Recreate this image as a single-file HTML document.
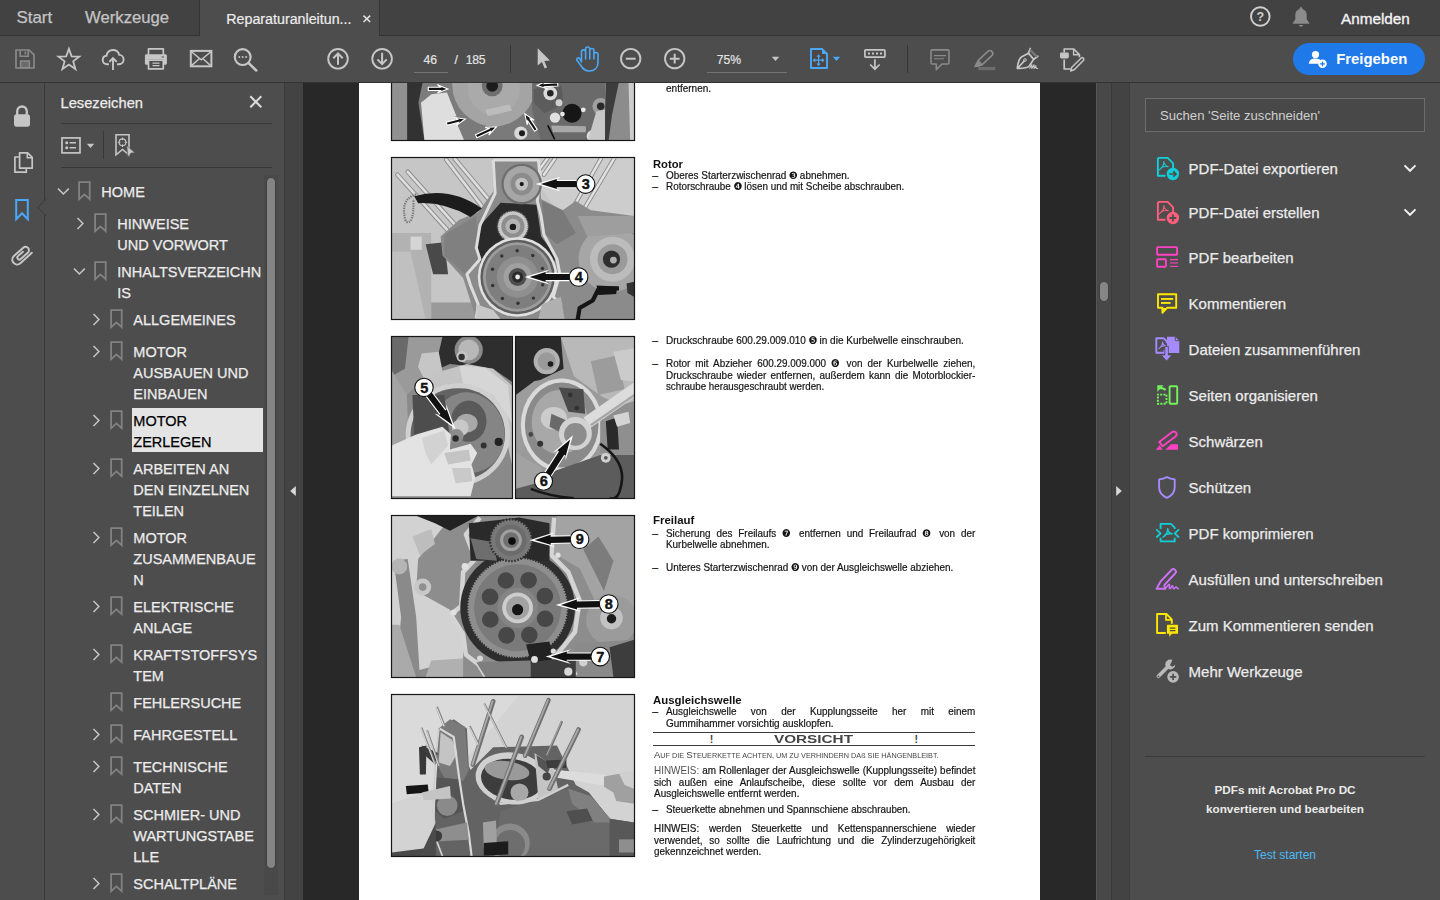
<!DOCTYPE html>
<html lang="de">
<head>
<meta charset="utf-8">
<title>Reparaturanleitung</title>
<style>
*{box-sizing:border-box;margin:0;padding:0}
html,body{width:1440px;height:900px;overflow:hidden;background:#4d4d4d;font-family:"Liberation Sans",sans-serif;color:#e6e6e6}
.abs{position:absolute}
#app{position:relative;width:1440px;height:900px;overflow:hidden;background:#4d4d4d}
/* top tab bar */
#tabbar{left:0;top:0;width:1440px;height:36px;background:#424242;border-bottom:1px solid #333}
#tab{left:199px;top:0;width:181px;height:36px;background:#4d4d4d;border-left:1px solid #353535;border-right:1px solid #353535}
.tabtxt{font-size:17.2px;color:#c4c4c4;top:7px;white-space:nowrap;-webkit-text-stroke:0.25px #c4c4c4}
/* toolbar */
#toolbar{left:0;top:36px;width:1440px;height:47px;background:#4d4d4d;border-bottom:1px solid #333}
.tbtxt{font-size:12.6px;color:#e2e2e2;white-space:nowrap;-webkit-text-stroke:0.2px #e2e2e2}
.ico{position:absolute;overflow:visible}
/* left */
#lstrip{left:0;top:83px;width:45px;height:817px;background:#4d4d4d;border-right:1px solid #3a3a3a}
#bm{left:45px;top:83px;width:240px;height:817px;background:#4d4d4d;border-right:1px solid #3a3a3a}
.bmt{position:absolute;font-size:14.5px;line-height:21px;color:#ececec;white-space:nowrap;-webkit-text-stroke:0.25px currentColor}
#lcol{left:285px;top:83px;width:18px;height:817px;background:#434343}
/* doc */
#doc{left:303px;top:83px;width:793px;height:817px;background:#282828}
#page{left:359px;top:83px;width:681px;height:817px;background:#fff}
#vscroll{left:1096px;top:83px;width:16px;height:817px;background:#484848;border-left:1px solid #575757;border-right:1px solid #3a3a3a}
#rcol{left:1112px;top:83px;width:18px;height:817px;background:#434343;border-right:1px solid #3c3c3c}
/* right */
#rp{left:1130px;top:83px;width:310px;height:817px;background:#4d4d4d}
.rpt{position:absolute;left:1188.6px;font-size:15px;color:#ececec;white-space:nowrap;line-height:20px;-webkit-text-stroke:0.25px #ececec}
.dl{position:absolute;white-space:nowrap;font-size:10.4px;line-height:12px;color:#141414;transform-origin:0 0;-webkit-text-stroke:0.2px}.dj{white-space:normal;text-align:justify;text-align-last:justify}.dg{font-family:"DejaVu Sans",sans-serif;font-size:10.6px;line-height:1px;position:relative;top:0.2px;letter-spacing:-0.8px;margin-left:-0.4px;-webkit-text-stroke:0}.dh{position:absolute;white-space:nowrap;font-size:11.7px;font-weight:bold;line-height:14px;color:#111;transform-origin:0 0}
</style>
</head>
<body>
<div id="app">
<div id="tabbar" class="abs"></div>
<div id="tab" class="abs"></div>
<div id="toolbar" class="abs"></div>
<div id="lstrip" class="abs"></div>
<div id="bm" class="abs"></div>
<div id="lcol" class="abs"></div>
<div id="doc" class="abs"></div>
<div id="page" class="abs"></div>
<div id="vscroll" class="abs"></div>
<div id="rcol" class="abs"></div>
<div id="rp" class="abs"></div>
<div class="abs tabtxt" style="left:16.5px;font-size:16.9px;top:7.5px">Start</div>
<div class="abs tabtxt" style="left:85px;font-size:16.7px;top:7.5px">Werkzeuge</div>
<div class="abs" style="left:226.3px;top:10.5px;font-size:14.25px;color:#ededed;white-space:nowrap;-webkit-text-stroke:0.2px #ededed">Reparaturanleitun...</div>
<svg class="ico" style="left:362px;top:14px" width="10" height="10" viewBox="0 0 10 10"><path d="M1.5 1.7 L8.2 8 M8.2 1.7 L1.5 8" stroke="#e0e0e0" stroke-width="1.6" fill="none"/></svg>
<svg class="ico" style="left:1249px;top:5px" width="23" height="23" viewBox="0 0 23 23"><circle cx="11.3" cy="11.5" r="9.3" fill="none" stroke="#d0d0d0" stroke-width="1.9"/><text x="11.3" y="16" font-family="Liberation Sans, sans-serif" font-size="12.5" font-weight="bold" fill="#d0d0d0" text-anchor="middle">?</text></svg>
<svg class="ico" style="left:1291px;top:6px" width="20" height="22" viewBox="0 0 20 22"><path d="M10 1.2c-.9 0-1.5.6-1.5 1.4v.5C5.700 3.900 4.300 6.300 4.300 9v4.300L1.800 17v.8h16.400V17l-2.500-3.700V9c0-2.700-1.400-5.100-4.200-5.900v-.5c0-.8-.6-1.400-1.500-1.400zM7.900 19c.2 1 1 1.700 2.100 1.700s1.900-.7 2.100-1.700z" fill="#8b8b8b"/></svg>
<div class="abs" style="left:1341px;top:9.5px;font-size:15.3px;color:#f2f2f2;white-space:nowrap;-webkit-text-stroke:0.35px #f2f2f2">Anmelden</div>
<!-- save -->
<svg class="ico" style="left:14px;top:48px" width="22" height="22" viewBox="0 0 22 22"><path d="M2 2h13.200l4.800 4.800V20H2z" fill="none" stroke="#8a8a8a" stroke-width="1.700" stroke-linejoin="round"/><path d="M6.200 2.400v5.800h8v-5.800" fill="none" stroke="#8a8a8a" stroke-width="1.600"/><rect x="10.600" y="3.600" width="1.500" height="2.800" fill="#8a8a8a"/><rect x="6.600" y="13" width="8.800" height="6.600" fill="#6a6a6a" stroke="#8a8a8a" stroke-width="1.500"/></svg>
<!-- star -->
<svg class="ico" style="left:56px;top:46px" width="26" height="26" viewBox="0 0 26 26"><path d="M12.900 2.900 L15.600 10.400 L23.300 10.600 L17.200 15.400 L19.400 23 L12.900 18.600 L6.400 23 L8.600 15.400 L2.500 10.600 L10.200 10.400 Z" fill="none" stroke="#c6c6c6" stroke-width="1.800" stroke-linejoin="miter"/></svg>
<!-- cloud upload -->
<svg class="ico" style="left:100px;top:47px" width="26" height="25" viewBox="0 0 26 25"><path d="M8.200 17.200H7c-2.500 0-4.300-1.800-4.300-4.200 0-2.200 1.600-4 3.800-4.200C7.100 5.300 9.800 3 13 3c3 0 5.500 2 6.300 4.900 2.500.1 4.300 2.100 4.300 4.600 0 2.600-2 4.700-4.600 4.700h-1.200" fill="none" stroke="#c6c6c6" stroke-width="1.900" stroke-linecap="round"/><path d="M13 23V11.500M9.300 14.800L13 11l3.700 3.800" fill="none" stroke="#c6c6c6" stroke-width="1.900"/></svg>
<!-- printer -->
<svg class="ico" style="left:144px;top:47px" width="24" height="24" viewBox="0 0 24 24"><path d="M4.500 8V1.800h14.800V8" fill="none" stroke="#c6c6c6" stroke-width="1.700" stroke-linejoin="round"/><path d="M2.400 7.300h19c.8 0 1.500.7 1.500 1.500v7.400c0 .8-.7 1.500-1.500 1.500h-2.100v-5.400H4.500v5.400H2.400c-.8 0-1.500-.7-1.500-1.500V8.800c0-.8.700-1.500 1.500-1.500z" fill="#c6c6c6"/><rect x="17.600" y="9.500" width="2.400" height="1" fill="#4d4d4d"/><rect x="4.500" y="13.200" width="14.800" height="8.600" fill="none" stroke="#c6c6c6" stroke-width="1.700" stroke-linejoin="round"/><path d="M8.500 16.200h7M8.500 18.700h7" stroke="#c6c6c6" stroke-width="1.200"/></svg>
<!-- mail -->
<svg class="ico" style="left:189px;top:49px" width="25" height="20" viewBox="0 0 25 20"><rect x="1.800" y="1.900" width="20.600" height="15.400" fill="none" stroke="#c6c6c6" stroke-width="2"/><path d="M2.200 2.500l10 8.300 10-8.300M2.200 16.900l8.300-7.400M22 16.900l-8.300-7.400" fill="none" stroke="#c6c6c6" stroke-width="1.500"/></svg>
<!-- search -->
<svg class="ico" style="left:232px;top:46px" width="27" height="27" viewBox="0 0 27 27"><circle cx="10.700" cy="11.100" r="7.900" fill="none" stroke="#c6c6c6" stroke-width="2.200"/><path d="M16.600 17l7.700 7.500" stroke="#c6c6c6" stroke-width="2.500" stroke-linecap="round"/><circle cx="7.300" cy="11.100" r="1" fill="#c6c6c6"/><circle cx="10.700" cy="11.100" r="1" fill="#c6c6c6"/><circle cx="14.100" cy="11.100" r="1" fill="#c6c6c6"/></svg>
<!-- up -->
<svg class="ico" style="left:326px;top:47px" width="24" height="24" viewBox="0 0 24 24"><circle cx="12" cy="11.800" r="9.800" fill="none" stroke="#c6c6c6" stroke-width="1.900"/><path d="M12 17.800V7M7.300 11.200L12 6.500l4.700 4.700" fill="none" stroke="#c6c6c6" stroke-width="2"/></svg>
<!-- down -->
<svg class="ico" style="left:370px;top:47px" width="24" height="24" viewBox="0 0 24 24"><circle cx="12.100" cy="11.800" r="9.800" fill="none" stroke="#c6c6c6" stroke-width="1.900"/><path d="M12.100 5.800V16.600M7.400 12.400l4.700 4.700 4.700-4.700" fill="none" stroke="#c6c6c6" stroke-width="2"/></svg>
<div class="abs tbtxt" style="left:423.600px;top:52.500px;font-size:12.200px">46</div>
<div class="abs" style="left:414px;top:72px;width:34px;height:1px;background:#747474"></div>
<div class="abs tbtxt" style="left:454.500px;top:52.500px;font-size:12.200px">/</div>
<div class="abs tbtxt" style="left:465.800px;top:52.500px;font-size:12.200px;letter-spacing:-0.3px">185</div>
<div class="abs" style="left:510px;top:45px;width:1px;height:28px;background:#363636"></div>
<!-- pointer -->
<svg class="ico" style="left:536px;top:47px" width="16" height="23" viewBox="0 0 16 23"><path d="M1.700 1.200v17.300l4.200-3.600 2.800 6.600 2.400-1-2.800-6.500 5.700-.4z" fill="#c6c6c6"/></svg>
<!-- hand -->
<svg class="ico" style="left:575px;top:46px" width="25" height="27" viewBox="0 0 25 27"><path d="M6.500 15.800V5.900a2.050 2.050 0 0 1 4.100 0V13M10.600 12.500V3.100a2.100 2.100 0 0 1 4.200 0V13M14.800 12.500V4.600a2.050 2.050 0 0 1 4.100 0V13M18.900 13V8.600a2.050 2.050 0 0 1 4.100 0V16.500c0 5-3.400 8.500-8.900 8.500-4 0-6.100-1.800-8.300-5.500L1.900 14.300c-1-1.800 1.400-3.300 2.700-1.700l1.900 3.200" fill="none" stroke="#4aa8f7" stroke-width="1.600" stroke-linejoin="round" stroke-linecap="round"/></svg>
<!-- minus -->
<svg class="ico" style="left:619px;top:47px" width="24" height="24" viewBox="0 0 24 24"><circle cx="11.700" cy="11.600" r="9.700" fill="none" stroke="#c6c6c6" stroke-width="1.900"/><path d="M6.800 11.700h9.800" stroke="#c6c6c6" stroke-width="2"/></svg>
<!-- plus -->
<svg class="ico" style="left:663px;top:47px" width="24" height="24" viewBox="0 0 24 24"><circle cx="11.700" cy="11.600" r="9.700" fill="none" stroke="#c6c6c6" stroke-width="1.900"/><path d="M6.800 11.700h9.800M11.700 6.800v9.800" stroke="#c6c6c6" stroke-width="2"/></svg>
<div class="abs tbtxt" style="left:716.800px;top:52.500px;font-size:12.200px">75%</div>
<div class="abs" style="left:707px;top:72px;width:80px;height:1px;background:#747474"></div>
<svg class="ico" style="left:771px;top:56px" width="9" height="6" viewBox="0 0 9 6"><path d="M.8.800h7.400L4.500 5z" fill="#c6c6c6"/></svg>
<!-- fit page -->
<svg class="ico" style="left:809px;top:47px" width="21" height="23" viewBox="0 0 21 23"><path d="M2 2h11l5 5v14H2z" fill="#4f4643" stroke="#4aa8f7" stroke-width="1.900" stroke-linejoin="round"/><path d="M13 2v5h5z" fill="#4aa8f7"/><path d="M9.600 7.200l-2.200 2.600h1.600v2.800H6.200v-1.600l-2.600 2.200 2.600 2.200v-1.600H9v2.800H7.400l2.200 2.600 2.200-2.600h-1.600v-2.800H13v1.600l2.600-2.200-2.600-2.200v1.600h-2.800V9.800h1.600z" fill="#4aa8f7"/></svg>
<svg class="ico" style="left:832px;top:56px" width="9" height="6" viewBox="0 0 9 6"><path d="M.8.800h7.400L4.500 5z" fill="#4aa8f7"/></svg>
<!-- keyboard down -->
<svg class="ico" style="left:863px;top:48px" width="24" height="23" viewBox="0 0 24 23"><rect x="1.900" y="1.800" width="20" height="7.400" rx="1" fill="none" stroke="#c6c6c6" stroke-width="1.700"/><rect x="5" y="4.500" width="2" height="2" fill="#c6c6c6"/><rect x="9" y="4.500" width="2" height="2" fill="#c6c6c6"/><rect x="13" y="4.500" width="2" height="2" fill="#c6c6c6"/><rect x="17" y="4.500" width="2" height="2" fill="#c6c6c6"/><path d="M11.900 11.200v9.600M7.200 16.500l4.700 4.700 4.700-4.700" fill="none" stroke="#c6c6c6" stroke-width="1.700"/></svg>
<div class="abs" style="left:907px;top:45px;width:1px;height:28px;background:#363636"></div>
<!-- comment (disabled) -->
<svg class="ico" style="left:929px;top:48px" width="23" height="23" viewBox="0 0 23 23"><path d="M3.200 1.900h15.600c.7 0 1.200.5 1.200 1.200v11.700c0 .7-.5 1.200-1.200 1.200H13L7.300 21.600V16H3.200c-.7 0-1.200-.5-1.200-1.200V3.100c0-.7.5-1.200 1.200-1.200z" fill="none" stroke="#8a8a8a" stroke-width="1.600" stroke-linejoin="round"/><path d="M5 7.600h12M5 10.700h10" stroke="#8a8a8a" stroke-width="1.100"/></svg>
<!-- highlighter (disabled) -->
<svg class="ico" style="left:972px;top:48px" width="24" height="23" viewBox="0 0 24 23"><g transform="translate(13.300 9.800) rotate(-43)"><path d="M-7.200 -2.900H6.200a2.900 2.900 0 0 1 0 5.800H-7.200z" fill="none" stroke="#8a8a8a" stroke-width="1.600" stroke-linejoin="round"/><path d="M-7.200 -3.400v6.800l-3.400-.9-4.200-3.400 4.200-1.600z" fill="#8a8a8a"/></g><rect x="6.200" y="19" width="17.200" height="3.200" fill="#6c6c6c"/></svg>
<!-- sign pen -->
<svg class="ico" style="left:1015px;top:47px" width="26" height="24" viewBox="0 0 26 24"><path d="M2.300 21.400c.4-5 1.400-9.500 4.500-11.600l6.800-3.600 5 6.200-4.300 6.600c-2.500 2.500-7 2.500-12 2.400zM3 20.800l6.500-7.200" fill="none" stroke="#c6c6c6" stroke-width="1.700" stroke-linejoin="round"/><circle cx="10" cy="13" r="1.300" fill="none" stroke="#c6c6c6" stroke-width="1"/><path d="M13.200 6.600L15.300 1.500M18.800 12.200l4-3" stroke="#c6c6c6" stroke-width="1.700" stroke-linecap="round"/><path d="M15.500 1.700l7.300 7.300-1.800 1.400-6.500-6.300z" fill="#777"/><path d="M14.500 21.500l2.300-3.800v3.800l2.200-3.800v3.800l1.800-2.800.5 2.800h1.800" fill="none" stroke="#c6c6c6" stroke-width="1.100" stroke-linejoin="round"/></svg>
<!-- stamp doc -->
<svg class="ico" style="left:1059px;top:47px" width="27" height="25" viewBox="0 0 27 25"><path d="M5.200 5.500V2h9.600l5.600 5.600v2.600M5.200 12.500V22h6.500" fill="none" stroke="#c6c6c6" stroke-width="1.700" stroke-linejoin="round"/><path d="M14.600 2.200v5.600h5.600" fill="none" stroke="#c6c6c6" stroke-width="1.400"/><rect x="1" y="5.500" width="8.800" height="6" rx="1.400" fill="#c6c6c6"/><path d="M12.800 20.300L22.300 11c1.300-1.200 3.500 1 2.300 2.300l-9.400 9.400-3.500 1.100z" fill="#4d4d4d" stroke="#c6c6c6" stroke-width="1.500" stroke-linejoin="round"/><path d="M12 22.200l1.800 1.700-2.800.8z" fill="#c6c6c6"/></svg>
<!-- Freigeben -->
<div class="abs" style="left:1293px;top:43px;width:132px;height:32px;border-radius:16px;background:#2079e9"></div>
<svg class="ico" style="left:1307px;top:50px" width="22" height="20" viewBox="0 0 22 20"><circle cx="8.500" cy="4.600" r="3.600" fill="#fff"/><path d="M1.800 13.800c0-3.400 2.800-5.300 6.700-5.300 2.400 0 4.300.7 5.500 2-.9.300-2.400 1.600-2.600 3.300z" fill="#fff"/><circle cx="15.500" cy="13.800" r="4.300" fill="#fff"/><path d="M13.100 13.800h4.800M15.500 11.400v4.800" stroke="#2079e9" stroke-width="1.300"/></svg>
<div class="abs" style="left:1336.200px;top:51.300px;font-size:14.900px;font-weight:bold;color:#fff;white-space:nowrap">Freigeben</div>
<!-- lock -->
<svg class="ico" style="left:13px;top:104px" width="18" height="24" viewBox="0 0 18 24"><path d="M4.200 11V7.500C4.200 4.600 6.300 2.500 9 2.500s4.800 2.100 4.800 5V11" fill="none" stroke="#c6c6c6" stroke-width="2.300"/><rect x="1" y="10.300" width="16" height="12.400" rx="2.600" fill="#c6c6c6"/></svg>
<!-- pages -->
<svg class="ico" style="left:13px;top:151px" width="21" height="23" viewBox="0 0 21 23"><path d="M6.600 1.800h8l4.600 4.600v10.800H6.600z" fill="none" stroke="#c6c6c6" stroke-width="1.700" stroke-linejoin="round"/><path d="M14.300 2v4.800h4.800" fill="none" stroke="#c6c6c6" stroke-width="1.500"/><path d="M6.400 6H1.900v15.200h11.400v-3.800" fill="none" stroke="#c6c6c6" stroke-width="1.700" stroke-linejoin="round"/></svg>
<!-- bookmark active -->
<svg class="ico" style="left:14px;top:198px" width="16" height="24" viewBox="0 0 16 24"><path d="M2.200 2h11.600v19.300L8 15.300 2.200 21.300z" fill="none" stroke="#49a8fb" stroke-width="2" stroke-linejoin="miter"/></svg>
<svg class="ico" style="left:36px;top:198px" width="10" height="20" viewBox="0 0 10 20"><path d="M9.500 1.500L1.800 9.500l7.700 8z" fill="#4d4d4d" stroke="#3a3a3a" stroke-width="1"/><rect x="9" y="2.500" width="1.500" height="14" fill="#4d4d4d"/></svg>
<!-- paperclip -->
<svg class="ico" style="left:8px;top:241px" width="28" height="28" viewBox="0 0 28 28"><g transform="translate(13.6 14.6) rotate(-42)"><path d="M9.500 4.800L-6 4.800A4.800 4.800 0 0 1 -6 -4.800L6.500 -4.800A3.400 3.400 0 0 1 6.500 2L-3 2A2 2 0 0 1 -3 -2L3.500 -2" fill="none" stroke="#c6c6c6" stroke-width="2" stroke-linecap="round"/></g></svg>
<div class="abs" style="left:60.5px;top:94.5px;font-size:14.7px;color:#ececec;white-space:nowrap;-webkit-text-stroke:0.25px #ececec">Lesezeichen</div>
<svg class="ico" style="left:248px;top:94px" width="16" height="16" viewBox="0 0 16 16"><path d="M2.300 2.300l11 11M13.300 2.300l-11 11" stroke="#dcdcdc" stroke-width="2"/></svg>
<div class="abs" style="left:61px;top:123px;width:211px;height:1px;background:#383838"></div>
<div class="abs" style="left:61px;top:167px;width:211px;height:1px;background:#383838"></div>
<svg class="ico" style="left:60px;top:136px" width="22" height="19" viewBox="0 0 22 19"><rect x="2" y="1.900" width="18" height="15" fill="none" stroke="#c6c6c6" stroke-width="1.700"/><circle cx="6.700" cy="6.800" r="1.500" fill="#c6c6c6"/><circle cx="6.700" cy="11.800" r="1.500" fill="#c6c6c6"/><path d="M9.600 6.800h6.400M9.600 11.800h6.400" stroke="#c6c6c6" stroke-width="1.600"/></svg>
<svg class="ico" style="left:86px;top:143px" width="9" height="6" viewBox="0 0 9 6"><path d="M.8.800h7.400L4.500 5z" fill="#c6c6c6"/></svg>
<div class="abs" style="left:103px;top:131px;width:1px;height:28px;background:#383838"></div>
<svg class="ico" style="left:114px;top:133px" width="23" height="25" viewBox="0 0 23 25"><path d="M2 1.800h13v20L8.500 16.500 2 21.800z" fill="none" stroke="#c6c6c6" stroke-width="1.600" stroke-linejoin="miter"/><circle cx="8.500" cy="9.300" r="3.400" fill="none" stroke="#c6c6c6" stroke-width="1.100"/><path d="M8.500 4.600v2.600M8.500 11.400v2.600M3.800 9.300h2.600M10.600 9.300h2.600" stroke="#c6c6c6" stroke-width="1"/><path d="M12.800 12.800l8.300 7-4 .3-3.300 4z" fill="#c6c6c6" stroke="#4d4d4d" stroke-width="0.600"/></svg>
<div class="abs" style="left:264px;top:175px;width:14px;height:720px;background:#494949"></div>
<div class="abs" style="left:266.300px;top:176.800px;width:10px;height:692px;border-radius:5px;background:#848484;border:1px solid #3f3f3f"></div>
<div class="abs" style="left:132px;top:408px;width:131px;height:44px;background:#e4e4e4"></div>
<svg class="ico" style="left:57px;top:187px" width="13" height="9" viewBox="0 0 13 9"><path d="M1 1.600l5.400 5.400 5.400-5.400" fill="none" stroke="#c6c6c6" stroke-width="1.500"/></svg>
<svg class="ico" style="left:78px;top:181px" width="13" height="20" viewBox="0 0 13 20"><path d="M1.100 1.200h10.600v17l-5.300-4.800-5.300 4.800z" fill="none" stroke="#828282" stroke-width="1.800"/></svg>
<div class="bmt" style="left:101.3px;top:182.4px">HOME</div>
<svg class="ico" style="left:75.5px;top:216.5px" width="9" height="13" viewBox="0 0 9 13"><path d="M1.500 1l5.400 5.500-5.400 5.500" fill="none" stroke="#c6c6c6" stroke-width="1.500"/></svg>
<svg class="ico" style="left:94px;top:213px" width="13" height="20" viewBox="0 0 13 20"><path d="M1.100 1.200h10.600v17l-5.300-4.800-5.300 4.800z" fill="none" stroke="#828282" stroke-width="1.800"/></svg>
<div class="bmt" style="left:117.3px;top:214.4px">HINWEISE<br>UND VORWORT</div>
<svg class="ico" style="left:73px;top:267px" width="13" height="9" viewBox="0 0 13 9"><path d="M1 1.600l5.400 5.400 5.400-5.400" fill="none" stroke="#c6c6c6" stroke-width="1.500"/></svg>
<svg class="ico" style="left:94px;top:261px" width="13" height="20" viewBox="0 0 13 20"><path d="M1.100 1.200h10.600v17l-5.300-4.800-5.300 4.800z" fill="none" stroke="#828282" stroke-width="1.800"/></svg>
<div class="bmt" style="left:117.3px;top:262.4px">INHALTSVERZEICHN<br>IS</div>
<svg class="ico" style="left:91.5px;top:312.5px" width="9" height="13" viewBox="0 0 9 13"><path d="M1.500 1l5.400 5.500-5.400 5.500" fill="none" stroke="#c6c6c6" stroke-width="1.500"/></svg>
<svg class="ico" style="left:110px;top:309px" width="13" height="20" viewBox="0 0 13 20"><path d="M1.100 1.200h10.600v17l-5.300-4.800-5.300 4.800z" fill="none" stroke="#828282" stroke-width="1.800"/></svg>
<div class="bmt" style="left:133.3px;top:310.4px">ALLGEMEINES</div>
<svg class="ico" style="left:91.5px;top:344.5px" width="9" height="13" viewBox="0 0 9 13"><path d="M1.500 1l5.400 5.500-5.400 5.500" fill="none" stroke="#c6c6c6" stroke-width="1.500"/></svg>
<svg class="ico" style="left:110px;top:341px" width="13" height="20" viewBox="0 0 13 20"><path d="M1.100 1.200h10.600v17l-5.300-4.800-5.300 4.800z" fill="none" stroke="#828282" stroke-width="1.800"/></svg>
<div class="bmt" style="left:133.3px;top:342.4px">MOTOR<br>AUSBAUEN UND<br>EINBAUEN</div>
<svg class="ico" style="left:91.5px;top:413.5px" width="9" height="13" viewBox="0 0 9 13"><path d="M1.500 1l5.400 5.500-5.400 5.500" fill="none" stroke="#c6c6c6" stroke-width="1.500"/></svg>
<svg class="ico" style="left:110px;top:410px" width="13" height="20" viewBox="0 0 13 20"><path d="M1.100 1.200h10.600v17l-5.300-4.800-5.300 4.800z" fill="none" stroke="#828282" stroke-width="1.800"/></svg>
<div class="bmt" style="left:133.3px;top:411.4px;color:#000">MOTOR<br>ZERLEGEN</div>
<svg class="ico" style="left:91.5px;top:461.5px" width="9" height="13" viewBox="0 0 9 13"><path d="M1.500 1l5.400 5.500-5.400 5.500" fill="none" stroke="#c6c6c6" stroke-width="1.500"/></svg>
<svg class="ico" style="left:110px;top:458px" width="13" height="20" viewBox="0 0 13 20"><path d="M1.100 1.200h10.600v17l-5.300-4.800-5.300 4.800z" fill="none" stroke="#828282" stroke-width="1.800"/></svg>
<div class="bmt" style="left:133.3px;top:459.4px">ARBEITEN AN<br>DEN EINZELNEN<br>TEILEN</div>
<svg class="ico" style="left:91.5px;top:530.5px" width="9" height="13" viewBox="0 0 9 13"><path d="M1.500 1l5.400 5.500-5.400 5.500" fill="none" stroke="#c6c6c6" stroke-width="1.500"/></svg>
<svg class="ico" style="left:110px;top:527px" width="13" height="20" viewBox="0 0 13 20"><path d="M1.100 1.200h10.600v17l-5.300-4.800-5.300 4.800z" fill="none" stroke="#828282" stroke-width="1.800"/></svg>
<div class="bmt" style="left:133.3px;top:528.4px">MOTOR<br>ZUSAMMENBAUE<br>N</div>
<svg class="ico" style="left:91.5px;top:599.5px" width="9" height="13" viewBox="0 0 9 13"><path d="M1.500 1l5.400 5.500-5.400 5.500" fill="none" stroke="#c6c6c6" stroke-width="1.500"/></svg>
<svg class="ico" style="left:110px;top:596px" width="13" height="20" viewBox="0 0 13 20"><path d="M1.100 1.200h10.600v17l-5.300-4.800-5.300 4.800z" fill="none" stroke="#828282" stroke-width="1.800"/></svg>
<div class="bmt" style="left:133.3px;top:597.4px">ELEKTRISCHE<br>ANLAGE</div>
<svg class="ico" style="left:91.5px;top:647.5px" width="9" height="13" viewBox="0 0 9 13"><path d="M1.500 1l5.400 5.500-5.400 5.500" fill="none" stroke="#c6c6c6" stroke-width="1.500"/></svg>
<svg class="ico" style="left:110px;top:644px" width="13" height="20" viewBox="0 0 13 20"><path d="M1.100 1.200h10.600v17l-5.300-4.800-5.300 4.800z" fill="none" stroke="#828282" stroke-width="1.800"/></svg>
<div class="bmt" style="left:133.3px;top:645.4px">KRAFTSTOFFSYS<br>TEM</div>
<svg class="ico" style="left:110px;top:692px" width="13" height="20" viewBox="0 0 13 20"><path d="M1.100 1.200h10.600v17l-5.300-4.800-5.300 4.800z" fill="none" stroke="#828282" stroke-width="1.800"/></svg>
<div class="bmt" style="left:133.3px;top:693.4px">FEHLERSUCHE</div>
<svg class="ico" style="left:91.5px;top:727.5px" width="9" height="13" viewBox="0 0 9 13"><path d="M1.500 1l5.400 5.500-5.400 5.500" fill="none" stroke="#c6c6c6" stroke-width="1.500"/></svg>
<svg class="ico" style="left:110px;top:724px" width="13" height="20" viewBox="0 0 13 20"><path d="M1.100 1.200h10.600v17l-5.300-4.800-5.300 4.800z" fill="none" stroke="#828282" stroke-width="1.800"/></svg>
<div class="bmt" style="left:133.3px;top:725.4px">FAHRGESTELL</div>
<svg class="ico" style="left:91.5px;top:759.5px" width="9" height="13" viewBox="0 0 9 13"><path d="M1.500 1l5.400 5.500-5.400 5.500" fill="none" stroke="#c6c6c6" stroke-width="1.500"/></svg>
<svg class="ico" style="left:110px;top:756px" width="13" height="20" viewBox="0 0 13 20"><path d="M1.100 1.200h10.600v17l-5.300-4.800-5.300 4.800z" fill="none" stroke="#828282" stroke-width="1.800"/></svg>
<div class="bmt" style="left:133.3px;top:757.4px">TECHNISCHE<br>DATEN</div>
<svg class="ico" style="left:91.5px;top:807.5px" width="9" height="13" viewBox="0 0 9 13"><path d="M1.500 1l5.400 5.500-5.400 5.500" fill="none" stroke="#c6c6c6" stroke-width="1.500"/></svg>
<svg class="ico" style="left:110px;top:804px" width="13" height="20" viewBox="0 0 13 20"><path d="M1.100 1.200h10.600v17l-5.300-4.800-5.300 4.800z" fill="none" stroke="#828282" stroke-width="1.800"/></svg>
<div class="bmt" style="left:133.3px;top:805.4px">SCHMIER- UND<br>WARTUNGSTABE<br>LLE</div>
<svg class="ico" style="left:91.5px;top:876.5px" width="9" height="13" viewBox="0 0 9 13"><path d="M1.500 1l5.400 5.500-5.400 5.500" fill="none" stroke="#c6c6c6" stroke-width="1.500"/></svg>
<svg class="ico" style="left:110px;top:873px" width="13" height="20" viewBox="0 0 13 20"><path d="M1.100 1.200h10.600v17l-5.300-4.800-5.300 4.800z" fill="none" stroke="#828282" stroke-width="1.800"/></svg>
<div class="bmt" style="left:133.3px;top:874.4px">SCHALTPLÄNE</div>
<svg class="ico" style="left:289px;top:485px" width="8" height="12" viewBox="0 0 8 12"><path d="M6.800 1v10L1.200 6z" fill="#d8d8d8"/></svg>
<svg class="ico" style="left:1115px;top:485px" width="8" height="12" viewBox="0 0 8 12"><path d="M1.200 1v10L6.800 6z" fill="#d8d8d8"/></svg>
<div class="abs" style="left:1099.300px;top:281.300px;width:10px;height:20.500px;border-radius:5px;background:#868686;border:1px solid #3f3f3f"></div>
<div class="abs" style="left:0;top:83px;width:1440px;height:817px;overflow:hidden"><div class="abs" style="left:0;top:-83px;width:1440px;height:900px"><svg class="ico" style="left:391px;top:157px" width="244" height="163" viewBox="0 0 244 163"><defs><clipPath id="cp1"><rect x="0" y="0" width="244" height="163"/></clipPath><filter id="bl1" x="-5%" y="-5%" width="110%" height="110%"><feGaussianBlur stdDeviation="0.5"/></filter></defs><g clip-path="url(#cp1)"><g filter="url(#bl1)"><rect width="244" height="163" fill="#c6c6c6"/><polygon points="128.5,0.8 243.1,0.8 243.1,72.1 166,53.3" fill="#cdcdcd" /><polygon points="0.8,75.9 40.2,75.9 40.2,162.3 0.8,162.3" fill="#b2b2b2" /><polygon points="0.8,94.7 19.5,94.7 34.6,162.3 0.8,162.3" fill="#c0c0c0" /><polygon points="19.5,79.6 30.8,79.6 30.8,92.8 19.5,92.8" fill="#d5d5d5" /><polygon points="40.2,145.4 94.7,145.4 94.7,162.3 40.2,162.3" fill="#9a9a9a" /><polygon points="34.6,87.2 53.3,85.3 57.1,117.2 42.1,117.2" fill="#4a4a4a" /><line x1="6.4" y1="17.7" x2="59.0" y2="75.9" stroke="#8e8e8e" stroke-width="4.6" stroke-linecap="round"/><line x1="6.4" y1="17.7" x2="59.0" y2="75.9" stroke="#dedede" stroke-width="2.6" stroke-linecap="round"/><line x1="16.7" y1="14.8" x2="64.6" y2="68.4" stroke="#8e8e8e" stroke-width="4.6" stroke-linecap="round"/><line x1="16.7" y1="14.8" x2="64.6" y2="68.4" stroke="#dedede" stroke-width="2.6" stroke-linecap="round"/><line x1="55.2" y1="2.6" x2="98.4" y2="59.0" stroke="#8e8e8e" stroke-width="4.6" stroke-linecap="round"/><line x1="55.2" y1="2.6" x2="98.4" y2="59.0" stroke="#dedede" stroke-width="2.6" stroke-linecap="round"/><line x1="63.7" y1="1.7" x2="102.2" y2="47.7" stroke="#8e8e8e" stroke-width="4.6" stroke-linecap="round"/><line x1="63.7" y1="1.7" x2="102.2" y2="47.7" stroke="#dedede" stroke-width="2.6" stroke-linecap="round"/><line x1="210.2" y1="1.1" x2="177.3" y2="59.0" stroke="#909090" stroke-width="4.4" stroke-linecap="round"/><line x1="210.2" y1="1.1" x2="177.3" y2="59.0" stroke="#e2e2e2" stroke-width="2.4" stroke-linecap="round"/><line x1="223.3" y1="1.1" x2="186.7" y2="62.7" stroke="#909090" stroke-width="4.4" stroke-linecap="round"/><line x1="223.3" y1="1.1" x2="186.7" y2="62.7" stroke="#e2e2e2" stroke-width="2.4" stroke-linecap="round"/><line x1="164.2" y1="1.1" x2="152.9" y2="17.7" stroke="#909090" stroke-width="4.4" stroke-linecap="round"/><line x1="164.2" y1="1.1" x2="152.9" y2="17.7" stroke="#e2e2e2" stroke-width="2.4" stroke-linecap="round"/><line x1="156.7" y1="1.1" x2="147.3" y2="13.9" stroke="#909090" stroke-width="4.4" stroke-linecap="round"/><line x1="156.7" y1="1.1" x2="147.3" y2="13.9" stroke="#e2e2e2" stroke-width="2.4" stroke-linecap="round"/><polygon points="49.6,79.6 68.4,62.7 87.2,55.2 102.2,34.6 101.2,2.6 147.3,2.6 150.1,42.1 171.7,53.3 184.8,44 199.9,53.3 243.1,59 243.1,162.3 85.3,162.3 72.1,121 51.5,98.4" fill="#8b8b8b" /><polygon points="151,44 171.7,53.3 184.8,75.9 166,87.2 152.9,75.9" fill="#7a7a7a" /><polygon points="53.3,77.8 85.3,59 87.2,102.2 75.9,119.1 53.3,98.4" fill="#808080" /><path d="M23.3,39.3 Q59,28.9 90.9,51.5 L79.6,59.9 Q53.3,44.9 27.1,46.2 Z" fill="#1c1c1c"/><path d="M25.2,37.4 Q8.3,42.1 14.8,64.6 Q23.3,68.4 22.4,42.1" fill="none" stroke="#7c7c7c" stroke-width="2.2" stroke-dasharray="1.4 1"/><circle cx="220.5" cy="102.2" r="32.9" fill="#a6a6a6" /><circle cx="221.5" cy="102.2" r="22.5" fill="#bcbcbc" /><circle cx="221.5" cy="102.2" r="15.0" fill="#9a9a9a" /><circle cx="220.5" cy="102.2" r="8.6" fill="#2e2e2e" /><circle cx="222.4" cy="103.1" r="3.4" fill="#b0b0b0" /><polygon points="186.7,59 243.1,59 243.1,75.9 196.1,79.6" fill="#9e9e9e" /><polygon points="90.9,66.5 109.7,45.8 145.4,47.7 150.1,79.6 164.2,98.4 162.3,113.5 90.9,113.5 85.3,87.2" fill="#2b2b2b" /><polyline points="102.2,2.6 104.1,36.4 89,68.4 85.3,90.9 89,102.2 75.9,117.2 79.6,128.5 87.2,147.3 85.3,161.4" fill="none" stroke="#dcdcdc" stroke-width="3" stroke-linejoin="round"/><polyline points="147.3,2.6 149.1,19.5 146.3,44 150.1,59 152.9,77.8 166,102.2 168.9,117.2 162.3,139.7 169.8,147.3 166,161.4" fill="none" stroke="#dcdcdc" stroke-width="3" stroke-linejoin="round"/><polyline points="102.2,3 147.3,3" fill="none" stroke="#dcdcdc" stroke-width="3"/><circle cx="130.7" cy="27.1" r="20.3" fill="#6e6e6e" /><circle cx="130.7" cy="27.1" r="18.0" fill="#a6a6a6" /><circle cx="130.7" cy="27.1" r="11.3" fill="#8c8c8c" /><circle cx="130.7" cy="27.1" r="6.4" fill="#c0c0c0" /><circle cx="130.7" cy="27.1" r="2.1" fill="#151515" /><circle cx="121.9" cy="69.3" r="15.4" fill="#c8c8c8" stroke="#555" stroke-width="1.6" stroke-dasharray="1 1"/><circle cx="121.9" cy="69.3" r="11.6" fill="#8e8e8e" /><circle cx="121.9" cy="69.3" r="7.5" fill="#b4b4b4" /><circle cx="121.9" cy="69.9" r="3.2" fill="#1a1a1a" /><circle cx="126.6" cy="120.0" r="39.8" fill="#e0e0e0" /><circle cx="126.6" cy="120.0" r="37.2" fill="#5e5e5e" /><circle cx="126.6" cy="120.0" r="34.7" fill="#9c9c9c" /><circle cx="126.6" cy="120.0" r="31.9" fill="#7e7e7e" /><circle cx="126.6" cy="120.0" r="20.7" fill="#8f8f8f" /><circle cx="126.6" cy="120.0" r="14.1" fill="#a0a0a0" /><circle cx="126.6" cy="120.0" r="9.0" fill="#505050" /><circle cx="126.6" cy="120.0" r="5.6" fill="#2a2a2a" /><circle cx="126.6" cy="120.0" r="2.4" fill="#e8e8e8" /><circle cx="151.7" cy="127.8" r="1.7" fill="#333" /><circle cx="142.4" cy="141.1" r="1.7" fill="#333" /><circle cx="127.0" cy="146.3" r="1.7" fill="#333" /><circle cx="111.4" cy="141.5" r="1.7" fill="#333" /><circle cx="101.7" cy="128.5" r="1.7" fill="#333" /><circle cx="101.5" cy="112.3" r="1.7" fill="#333" /><circle cx="110.8" cy="99.0" r="1.7" fill="#333" /><circle cx="126.2" cy="93.7" r="1.7" fill="#333" /><circle cx="141.8" cy="98.5" r="1.7" fill="#333" /><circle cx="151.5" cy="111.5" r="1.7" fill="#333" /><polygon points="85.3,147.3 102.2,152.9 109.7,162.3 85.3,162.3" fill="#c8c8c8" /><polygon points="151,147.3 169.8,139.7 173.6,162.3 147.3,162.3" fill="#b0b0b0" /><path d="M228,131.3 L207.4,132.2 L201.7,143.5 L188.6,151 L186.7,162.3" fill="none" stroke="#161616" stroke-width="4.2" stroke-linejoin="round"/><polygon points="205.5,128.5 226.2,129.4 225.2,136.9 207.4,137.9" fill="#141414" /><polygon points="235.5,126.6 243.1,124.7 243.1,139.7 236.5,136" fill="#303030" /></g><polygon points="186.3,31.3 165.1,31.3 170.0,34.5 144.6,27.1 170.0,19.7 165.1,22.9 186.3,22.9" fill="#fff"/><polygon points="186.3,30.2 165.8,30.2 165.8,32.1 149.8,27.1 165.8,22.1 165.8,24.0 186.3,24.0" fill="#111"/><circle cx="194.6" cy="27.1" r="9.3" fill="#fff" stroke="#111" stroke-width="1.1"/><text x="194.79999999999998" y="32.2" text-anchor="middle" font-family="Liberation Sans, sans-serif" font-weight="bold" font-size="14.5" fill="#111" stroke="#111" stroke-width="0.4">3</text><polygon points="179.3,124.2 153.9,124.2 158.8,127.4 133.4,120.0 158.8,112.6 153.9,115.8 179.3,115.8" fill="#fff"/><polygon points="179.3,123.1 154.6,123.1 154.6,125.0 138.6,120.0 154.6,115.0 154.6,116.9 179.3,116.9" fill="#111"/><circle cx="187.6" cy="120.0" r="9.3" fill="#fff" stroke="#111" stroke-width="1.1"/><text x="187.79999999999998" y="125.1" text-anchor="middle" font-family="Liberation Sans, sans-serif" font-weight="bold" font-size="14.5" fill="#111" stroke="#111" stroke-width="0.4">4</text></g><rect x="0.5" y="0.5" width="243" height="162" fill="none" stroke="#161616" stroke-width="1.2"/></svg>
<svg class="ico" style="left:391px;top:79px" width="244" height="62" viewBox="0 0 244 62"><defs><clipPath id="cp0"><rect x="0" y="0" width="244" height="62"/></clipPath><filter id="bl0" x="-5%" y="-5%" width="110%" height="110%"><feGaussianBlur stdDeviation="0.5"/></filter></defs><g clip-path="url(#cp0)"><g filter="url(#bl0)"><rect width="244" height="62" fill="#7c7c7c"/><polygon points="0.5,3 17,3 17,62 0.5,62" fill="#909090" /><polygon points="16.1,3 31.7,3 27.4,23.8 33.5,62 16.1,62" fill="#333" /><polygon points="30,23.8 40.4,15.2 56,13.4 66.4,39.5 78.6,62 33.5,62" fill="#dedede" /><polygon points="63,37.7 141.1,29 153.2,62 73.4,62" fill="#7a7a7a" /><circle cx="102.9" cy="5.6" r="41.7" fill="#a4a4a4" /><circle cx="102.9" cy="9.9" r="26.0" fill="#aaaaaa" /><circle cx="101.2" cy="6.8" r="10.4" fill="#6e6e6e" /><circle cx="101.2" cy="6.8" r="5.9" fill="#1c1c1c" /><polygon points="94.2,30.8 118.5,25.6 121.1,31.6 96.8,36.9" fill="#bcbcbc" /><polygon points="141.1,3 214.9,3 214.9,62 149.8,62 141.1,30.8" fill="#6a6a6a" /><polygon points="142.8,9.9 170.6,6.5 172.3,25.6 153.2,34.2 142.8,23.8" fill="#5c5c5c" /><circle cx="159.3" cy="14.3" r="6.9" fill="#dadada" /><circle cx="159.3" cy="14.3" r="3.3" fill="#222" /><circle cx="164.0" cy="38.6" r="5.2" fill="#e0e0e0" /><circle cx="181.0" cy="34.2" r="9.5" fill="#161616" /><circle cx="209.7" cy="27.3" r="8.3" fill="#a0a0a0" /><circle cx="209.7" cy="27.3" r="3.8" fill="#2a2a2a" /><circle cx="201.9" cy="57.2" r="6.2" fill="#dcdcdc" /><circle cx="201.9" cy="57.7" r="2.8" fill="#333" /><circle cx="129.8" cy="54.2" r="6.6" fill="#d8d8d8" /><circle cx="131.0" cy="54.2" r="3.0" fill="#1a1a1a" /><circle cx="168.0" cy="23.8" r="3.5" fill="#d0d0d0" /><circle cx="192.3" cy="30.8" r="2.4" fill="#e8e8e8" /><circle cx="171.5" cy="35.1" r="2.3" fill="#e8e8e8" /><polygon points="160.2,46.4 194.9,47.3 194.9,53.3 161.9,53.3" fill="#a8a8a8" /><line x1="156.7" y1="46.4" x2="163.7" y2="60.3" stroke="#111" stroke-width="1.6" /><polygon points="214,3 244.4,3 244.4,62 214,62" fill="#8c8c8c" /><polygon points="214.9,3 227.9,3 221,36 217.5,62 209.7,62 214,37.7" fill="#3c3c3c" /><polygon points="237.5,3 244.4,3 244.4,62 239.2,62" fill="#cdcdcd" /><polygon points="205.3,32.5 214,30.8 214,62 196.7,62" fill="#c8c8c8" /></g><polygon points="37.3,8.3 49.4,8.3 46.4,5.7 56.9,9.9 46.4,14.1 49.4,11.5 37.3,11.5" fill="#111" stroke="#fff" stroke-width="1.1"/><polygon points="55.3,43.1 66.6,40.3 63.1,38.5 74.3,40.0 65.1,46.6 67.4,43.4 56.1,46.3" fill="#111" stroke="#fff" stroke-width="1.1"/><polygon points="84.5,55.7 98.0,49.5 94.2,48.4 105.5,47.8 97.7,56.0 99.4,52.4 85.9,58.7" fill="#111" stroke="#fff" stroke-width="1.1"/><polygon points="143.6,52.2 136.7,41.9 136.2,45.9 133.8,34.8 143.1,41.2 139.3,40.1 146.2,50.4" fill="#111" stroke="#fff" stroke-width="1.1"/><polygon points="166.9,7.0 153.6,7.7 156.7,10.1 146.0,6.5 156.3,1.8 153.4,4.5 166.7,3.8" fill="#111" stroke="#fff" stroke-width="1.1"/></g><rect x="0.5" y="0.5" width="243" height="61" fill="none" stroke="#161616" stroke-width="1.2"/></svg>
<svg class="ico" style="left:391px;top:336px" width="122" height="163" viewBox="0 0 122 163"><defs><clipPath id="cp2a"><rect x="0" y="0" width="122" height="163"/></clipPath><filter id="bl2a" x="-5%" y="-5%" width="110%" height="110%"><feGaussianBlur stdDeviation="0.5"/></filter></defs><g clip-path="url(#cp2a)"><g filter="url(#bl2a)"><rect width="122" height="163" fill="#8a8a8a"/><polygon points="0.8,0.8 53.3,0.8 40.2,34.5 15.8,58.9 0.8,75.8" fill="#9a9a9a" /><polygon points="0.8,0.8 17.6,0.8 13.9,32.7 0.8,40.2" fill="#6a6a6a" /><polygon points="0.8,34.5 15.8,58.9 17.6,102.1 0.8,113.4" fill="#a4a4a4" /><polygon points="51.4,0.8 120.9,0.8 120.9,45.8 102.1,32.7 58.9,28 43.9,34.5" fill="#2e2e2e" /><polygon points="30.8,17.6 47.7,15.8 51.4,34.5 34.5,45.8 27,30.8" fill="#c6c6c6" /><circle cx="77.7" cy="13.9" r="14.1" fill="#8a8a8a" /><circle cx="77.7" cy="13.9" r="10.3" fill="#b8b8b8" /><circle cx="71.1" cy="20.5" r="5.6" fill="#c4c4c4" /><circle cx="70.6" cy="21.0" r="3.2" fill="#333" /><polygon points="42,37.4 75.8,28 102.1,32.7 120.9,49.6 120.9,128.4 109.6,75.8 87.1,57.1 58.9,47.7 25.2,68.3" fill="#c4c4c4" /><polygon points="68.3,29.8 94.6,31.7 117.1,49.6 120.9,87.1 102.1,58.9 72.1,47.7" fill="#d6d6d6" /><ellipse cx="66.8" cy="98.4" rx="52.2" ry="51.1" fill="#d0d0d0" transform="rotate(-14 66.8 98.4)"/><ellipse cx="66.8" cy="98.4" rx="47.3" ry="46.2" fill="#636363" transform="rotate(-14 66.8 98.4)"/><ellipse cx="77.7" cy="96.5" rx="35.7" ry="40.4" fill="#858585" transform="rotate(-14 77.7 96.5)"/><polygon points="21.4,58.9 53.3,58.9 58.9,102.1 23.3,102.1" fill="#4e4e4e" /><ellipse cx="77.7" cy="85.2" rx="17.8" ry="20.6" fill="#5a5a5a"/><ellipse cx="75.7" cy="87.2" rx="10.9" ry="9.4" fill="#a8a8a8"/><circle cx="69.3" cy="91.8" r="8.4" fill="#c8c8c8" /><circle cx="65.5" cy="100.2" r="7.1" fill="#8c8c8c" /><circle cx="64.6" cy="102.5" r="3.2" fill="#2c2c2c" /><circle cx="107.7" cy="105.9" r="4.1" fill="#222" /><circle cx="92.7" cy="109.6" r="3.0" fill="#333" /><polygon points="0.8,109.6 25.2,98.4 51.4,90.8 59.9,98.4 58.9,113.4 79.6,107.7 86.2,117.1 80.5,128.4 84.3,141.5 79.6,160.3 0.8,160.3" fill="#e3e3e3" /><polygon points="30.8,102.1 53.3,94.6 57.1,109.6 40.2,128.4 34.5,117.1" fill="#d2d2d2" /><polygon points="53.3,117.1 77.7,113.4 79.6,124.6 57.1,128.4" fill="#c4c4c4" /><polygon points="60.8,132.1 79.6,132.1 81.5,145.3 64.6,147.2" fill="#c9c9c9" /></g><polygon points="41.3,55.4 55.6,74.3 55.2,68.4 64.6,93.2 43.4,77.4 48.9,79.3 34.6,60.5" fill="#fff"/><polygon points="40.4,56.1 54.3,74.4 55.8,73.2 61.5,89.0 47.8,79.3 49.4,78.1 35.5,59.8" fill="#111"/><circle cx="33.0" cy="51.4" r="9.2" fill="#fff" stroke="#111" stroke-width="1.1"/><text x="33.2" y="56.5" text-anchor="middle" font-family="Liberation Sans, sans-serif" font-weight="bold" font-size="14.5" fill="#111" stroke="#111" stroke-width="0.4">5</text></g><rect x="0.5" y="0.5" width="121" height="162" fill="none" stroke="#161616" stroke-width="1.2"/></svg>
<svg class="ico" style="left:515px;top:336px" width="120" height="163" viewBox="0 0 120 163"><defs><clipPath id="cp2b"><rect x="0" y="0" width="120" height="163"/></clipPath><filter id="bl2b" x="-5%" y="-5%" width="110%" height="110%"><feGaussianBlur stdDeviation="0.5"/></filter></defs><g clip-path="url(#cp2b)"><g filter="url(#bl2b)"><rect width="120" height="163" fill="#9a9a9a"/><polygon points="45.8,0.8 120.9,0.8 120.9,75.8 87.1,60.8 58.9,40.2" fill="#b9b9b9" /><polygon points="75.8,25.2 102.1,19.5 109.6,53.3 83.3,58.9" fill="#9c9c9c" /><polygon points="98.4,15.8 120.9,12 120.9,45.8 105.9,43.9" fill="#cbcbcb" /><polygon points="0.8,0.8 45.8,0.8 48.6,32.7 19.5,46.7 0.8,60.8" fill="#2a2a2a" /><circle cx="31.7" cy="25.2" r="13.1" fill="#b2b2b2" /><circle cx="31.7" cy="25.2" r="9.0" fill="#9a9a9a" /><circle cx="35.5" cy="28.0" r="2.8" fill="#1a1a1a" /><polygon points="0.8,58.9 19.5,44.9 53.3,40.2 34.5,53.3 13.9,75.8 6.4,102.1 8.3,126.5 0.8,119" fill="#9c9c9c" /><ellipse cx="46.7" cy="89.0" rx="40.9" ry="46.5" fill="#dadada"/><ellipse cx="46.7" cy="89.0" rx="36.8" ry="42.4" fill="#8a8a8a"/><ellipse cx="44.9" cy="86.2" rx="28.2" ry="32.3" fill="#a8a8a8"/><polygon points="43.9,51.4 68.3,53.3 70.2,77.7 53.3,75.8" fill="#4c4c4c" /><ellipse cx="38.9" cy="82.2" rx="13.1" ry="11.3" fill="#cccccc"/><polygon points="36.4,77.7 53.3,85.2 49.6,98.4 34.5,90.8" fill="#6a6a6a" /><circle cx="25.2" cy="107.7" r="3.0" fill="#333" /><circle cx="15.8" cy="98.4" r="2.3" fill="#444" /><circle cx="55.2" cy="58.9" r="2.4" fill="#333" /><circle cx="61.8" cy="72.1" r="2.4" fill="#333" /><polygon points="85.2,75.8 120.9,64.6 120.9,120.9 85.2,117.1" fill="#8f8f8f" /><polygon points="90.8,85.2 102.1,81.5 104,113.4 92.7,113.4" fill="#2a2a2a" /><polygon points="98.4,79.6 113.4,75.8 115.2,87.1 102.1,90.8" fill="#d4d4d4" /><polygon points="0.8,134 34.5,136.8 85.2,119 120.9,119 120.9,162.2 0.8,162.2" fill="#5c5c5c" /><polygon points="0.8,117.1 27,132.1 21.4,147.2 0.8,152.8" fill="#a2a2a2" /><circle cx="90.8" cy="121.8" r="4.9" fill="#d0d0d0" /><circle cx="90.8" cy="121.8" r="1.9" fill="#555" /><line x1="122.8" y1="51.4" x2="72.1" y2="86.7" stroke="#dcdcdc" stroke-width="12.5" /><line x1="122.8" y1="56.7" x2="75.8" y2="89.3" stroke="#a8a8a8" stroke-width="2.5" /><circle cx="60.4" cy="97.4" r="16.5" fill="#d2d2d2" /><circle cx="60.4" cy="98.4" r="11.3" fill="#8c8c8c" /><path d="M85.2,107.7 Q109.6,124.6 106.8,145.3 T94.6,162.2" fill="none" stroke="#151515" stroke-width="2.6"/><path d="M15.8,152.8 Q34.5,160.3 58.9,162.2" fill="none" stroke="#151515" stroke-width="2.4"/></g><polygon points="29.3,136.3 43.4,114.2 38.1,116.6 58.0,99.2 50.6,124.6 50.5,118.7 36.3,140.8" fill="#fff"/><polygon points="30.2,136.9 44.0,115.4 42.4,114.3 55.2,103.5 50.8,119.7 49.2,118.7 35.4,140.2" fill="#111"/><circle cx="28.5" cy="145.3" r="9" fill="#fff" stroke="#111" stroke-width="1.1"/><text x="28.7" y="150.4" text-anchor="middle" font-family="Liberation Sans, sans-serif" font-weight="bold" font-size="14.5" fill="#111" stroke="#111" stroke-width="0.4">6</text></g><rect x="0.5" y="0.5" width="119" height="162" fill="none" stroke="#161616" stroke-width="1.2"/></svg>
<svg class="ico" style="left:391px;top:515px" width="244" height="163" viewBox="0 0 244 163"><defs><clipPath id="cp3"><rect x="0" y="0" width="244" height="163"/></clipPath><filter id="bl3" x="-5%" y="-5%" width="110%" height="110%"><feGaussianBlur stdDeviation="0.5"/></filter></defs><g clip-path="url(#cp3)"><g filter="url(#bl3)"><rect width="244" height="163" fill="#8d8d8d"/><polygon points="0.8,0.8 60.9,0.8 27.1,44 25.2,75.9 59,94.7 72.1,119.1 72.1,143.5 0.8,162.3" fill="#d2d2d2" /><polygon points="25.2,0.8 87.2,0.8 59,15.8 44,8.3" fill="#222" /><polygon points="2.6,45.8 16.7,44 25.2,102.2 28.9,162.3 4.5,162.3 10.1,102.2" fill="#8a8a8a" /><polygon points="0.8,109.7 8.3,109.7 25.2,162.3 0.8,162.3" fill="#aaaaaa" /><polygon points="40.2,145.4 72.1,143.5 72.1,162.3 34.6,162.3" fill="#b0b0b0" /><circle cx="8.3" cy="51.5" r="7.9" fill="#b5b5b5" /><circle cx="31.7" cy="72.1" r="8.5" fill="#c8c8c8" /><circle cx="31.7" cy="72.1" r="3.8" fill="#909090" /><polygon points="21.4,21.4 40.2,13.9 44,28.9 28.9,40.2" fill="#bdbdbd" /><polygon points="166,0.8 243.1,0.8 243.1,94.7 203.6,85.3 188.6,53.3 162.3,38.3" fill="#a3a3a3" /><polygon points="192.3,34.6 207.4,21.4 222.4,45.8 213,75.9 201.7,53.3" fill="#7c7c7c" /><circle cx="220.5" cy="105.0" r="25.4" fill="#9b9b9b" /><circle cx="220.5" cy="103.1" r="11.3" fill="#c2c2c2" /><circle cx="220.5" cy="103.7" r="4.7" fill="#1e1e1e" /><polygon points="184.8,128.5 243.1,124.7 243.1,162.3 177.3,162.3" fill="#8a8a8a" /><polygon points="218.6,132.2 243.1,124.7 243.1,162.3 222.4,162.3" fill="#3e3e3e" /><polyline points="89,2.6 74.9,19.5 84.3,44 72.1,57.1 70.3,90.9 59.9,99.4 72.1,119.1 74.9,139.7 87.2,149.1 94.7,161.4" fill="none" stroke="#d4d4d4" stroke-width="4.5" stroke-linejoin="round"/><polyline points="163.2,2.6 160.4,40.2 177.3,57.1 188.6,85.3 183.9,117.2 166,139.7 177.3,147.3 184.8,160.4" fill="none" stroke="#d4d4d4" stroke-width="4.5" stroke-linejoin="round"/><circle cx="126.6" cy="92.8" r="57.3" fill="#2e2e2e" /><polygon points="77.8,8.3 128.5,2.6 158.5,8.3 158.5,45.8 79.6,45.8" fill="#2c2c2c" /><polygon points="79.6,23.3 102.2,27.1 105.9,45.8 85.3,44" fill="#6e6e6e" /><circle cx="126.6" cy="92.8" r="50.3" fill="#8e8e8e" stroke="#2e2e2e" stroke-width="2.2" stroke-dasharray="1.3 1.5"/><circle cx="126.6" cy="92.8" r="43.6" fill="#7a7a7a" /><circle cx="154.2" cy="103.8" r="8.3" fill="#474747" /><circle cx="138.3" cy="120.1" r="8.3" fill="#474747" /><circle cx="115.6" cy="120.4" r="8.3" fill="#474747" /><circle cx="99.3" cy="104.5" r="8.3" fill="#474747" /><circle cx="99.0" cy="81.8" r="8.3" fill="#474747" /><circle cx="114.9" cy="65.5" r="8.3" fill="#474747" /><circle cx="137.6" cy="65.2" r="8.3" fill="#474747" /><circle cx="153.9" cy="81.1" r="8.3" fill="#474747" /><circle cx="126.6" cy="92.8" r="20.3" fill="#858585" /><circle cx="126.6" cy="92.8" r="15.4" fill="#cdcdcd" /><circle cx="126.6" cy="92.8" r="11.6" fill="#a2a2a2" /><circle cx="126.6" cy="94.7" r="5.6" fill="#121212" /><circle cx="120.0" cy="25.2" r="21.0" fill="#787878" stroke="#2e2e2e" stroke-width="2.4" stroke-dasharray="1.5 1.6"/><circle cx="120.0" cy="25.2" r="15.8" fill="#6c6c6c" /><circle cx="120.0" cy="25.2" r="10.9" fill="#a0a0a0" /><circle cx="120.0" cy="25.2" r="7.9" fill="#707070" /><circle cx="121.0" cy="26.1" r="3.8" fill="#0e0e0e" /><polygon points="135.1,129.4 158.5,126.6 160.8,145.4 140.1,148.2" fill="#202020" /><polygon points="85.3,147.3 139.7,145.4 139.7,162.3 94.7,162.3" fill="#7e7e7e" /><polygon points="139.7,147.3 184.8,141.6 184.8,162.3 139.7,162.3" fill="#3c3c3c" /><circle cx="143.5" cy="144.4" r="3.4" fill="#e0e0e0" /><circle cx="162.3" cy="136.0" r="2.6" fill="#dcdcdc" /><circle cx="89.0" cy="143.5" r="3.0" fill="#d8d8d8" /><circle cx="74.0" cy="51.5" r="3.4" fill="#e0e0e0" /><circle cx="62.7" cy="97.5" r="3.0" fill="#e0e0e0" /><circle cx="167.0" cy="40.2" r="2.6" fill="#e0e0e0" /><circle cx="177.3" cy="156.7" r="4.1" fill="#d8d8d8" /><circle cx="192.3" cy="147.3" r="4.1" fill="#d0d0d0" /></g><polygon points="180.4,28.6 159.0,29.0 163.9,32.1 138.4,25.2 163.6,17.3 158.8,20.6 180.2,20.2" fill="#fff"/><polygon points="180.4,27.5 159.7,27.9 159.7,29.8 143.6,25.1 159.5,19.8 159.5,21.7 180.2,21.3" fill="#111"/><circle cx="188.6" cy="24.2" r="9.3" fill="#fff" stroke="#111" stroke-width="1.1"/><text x="188.79999999999998" y="29.299999999999997" text-anchor="middle" font-family="Liberation Sans, sans-serif" font-weight="bold" font-size="14.5" fill="#111" stroke="#111" stroke-width="0.4">9</text><polygon points="209.5,93.4 185.3,93.8 190.2,96.9 164.7,90.0 190.0,82.1 185.1,85.4 209.3,85.0" fill="#fff"/><polygon points="209.5,92.3 186.0,92.7 186.0,94.6 169.9,89.9 185.8,84.6 185.8,86.5 209.3,86.1" fill="#111"/><circle cx="217.7" cy="89.0" r="9.3" fill="#fff" stroke="#111" stroke-width="1.1"/><text x="217.89999999999998" y="94.1" text-anchor="middle" font-family="Liberation Sans, sans-serif" font-weight="bold" font-size="14.5" fill="#111" stroke="#111" stroke-width="0.4">8</text><polygon points="200.9,145.8 175.1,145.8 180.0,149.0 154.6,141.6 180.0,134.2 175.1,137.4 200.9,137.4" fill="#fff"/><polygon points="200.9,144.7 175.8,144.7 175.8,146.6 159.8,141.6 175.8,136.6 175.8,138.5 200.9,138.5" fill="#111"/><circle cx="209.2" cy="141.6" r="9.3" fill="#fff" stroke="#111" stroke-width="1.1"/><text x="209.39999999999998" y="146.7" text-anchor="middle" font-family="Liberation Sans, sans-serif" font-weight="bold" font-size="14.5" fill="#111" stroke="#111" stroke-width="0.4">7</text></g><rect x="0.5" y="0.5" width="243" height="162" fill="none" stroke="#161616" stroke-width="1.2"/></svg>
<svg class="ico" style="left:391px;top:694px" width="244" height="163" viewBox="0 0 244 163"><defs><clipPath id="cp4"><rect x="0" y="0" width="244" height="163"/></clipPath><filter id="bl4" x="-5%" y="-5%" width="110%" height="110%"><feGaussianBlur stdDeviation="0.5"/></filter></defs><g clip-path="url(#cp4)"><g filter="url(#bl4)"><rect width="244" height="163" fill="#d3d3d3"/><polygon points="0.8,0.8 128.5,0.8 53.3,90.9 0.8,109.7" fill="#dadada" /><polygon points="79.6,75.9 102.2,53.3 166,51.5 184.8,90.9 198,98.4 218.6,124.7 243.1,128.5 243.1,162.3 42.1,162.3 44,117.2 45.8,77.8 49.6,34.6 62.7,25.2 75.9,34.6 77.8,72.1" fill="#646464" /><polygon points="109.7,117.2 177.3,94.7 199.9,102.2 222.4,128.5 222.4,162.3 102.2,162.3" fill="#6a6a6a" /><polygon points="177.3,94.7 199.9,102.2 222.4,128.5 203.6,128.5 181.1,109.7" fill="#808080" /><polygon points="218.6,124.7 243.1,128.5 243.1,162.3 218.6,162.3" fill="#585858" /><polygon points="228,145.4 243.1,145.4 243.1,158.5 228,158.5" fill="#8e8e8e" /><polygon points="0.8,158.5 44,152.9 44,162.3 0.8,162.3" fill="#4a4a4a" /><polygon points="47.7,34.6 59,25.2 74,32.7 77.8,75.9 72.1,87.2 53.3,83.4 44.9,68.4" fill="#7a7a7a" /><polygon points="49.6,38.3 60.9,45.8 66.5,59 59,72.1 47.7,68.4" fill="#c4c4c4" /><polygon points="45.8,83.4 68.4,85.3 72.1,117.2 53.3,124.7 44,117.2" fill="#555" /><circle cx="56.2" cy="111.6" r="10.3" fill="#8a8a8a" /><polyline points="48.7,34.6 62.7,43 68.4,85.3 72.1,109.7 77.8,139.7 80.6,162.3" fill="none" stroke="#d8d8d8" stroke-width="2.2" stroke-linejoin="round"/><polyline points="47.7,35.5 44,72.1 42.1,117.2 45.8,147.3 51.5,162.3" fill="none" stroke="#cfcfcf" stroke-width="1.8" stroke-linejoin="round"/><ellipse cx="121.0" cy="84.3" rx="36.6" ry="25.9" fill="#d0d0d0" transform="rotate(8 121.0 84.3)"/><ellipse cx="121.0" cy="85.3" rx="31.0" ry="20.3" fill="#3c3c3c" transform="rotate(8 121.0 84.3)"/><ellipse cx="115.0" cy="77.3" rx="22.5" ry="9.4" fill="#9a9a9a" transform="rotate(8 121.0 84.3)"/><circle cx="128.5" cy="98.4" r="9.0" fill="#a8a8a8" /><polygon points="143.5,59 162.3,72.1 167,94.7 147.3,105.9 145.4,81.5" fill="#c4c4c4" /><polygon points="145.4,60.9 160.4,70.3 156.7,79.6 147.3,72.1" fill="#555" /><circle cx="155.7" cy="82.5" r="4.1" fill="#444" /><polyline points="100.3,102.2 109.7,109.7 147.3,105.9 177.3,90.9" fill="none" stroke="#d0d0d0" stroke-width="2.4"/><circle cx="119.1" cy="149.1" r="19.7" fill="#8a8a8a" /><circle cx="119.1" cy="151.0" r="15.0" fill="#6e6e6e" /><polygon points="91.9,128.5 105,126.6 105.9,152.9 92.8,154.8" fill="#a0a0a0" /><polygon points="92.8,149.1 117.2,147.3 117.2,160.4 92.8,161.4" fill="#1c1c1c" /><polygon points="175.4,117.2 196.1,114.4 201.7,126.6 181.1,130.4" fill="#505050" /><polygon points="14.8,91.9 36.8,90.5 37.6,98.4 15.8,100.3" fill="#181818" /><polygon points="30.8,98.4 59,91.9 59.9,104.4 32.7,106.3" fill="#c4c4c4" /><polygon points="42.1,136 75.9,128.5 77.8,145.8 44,147.6" fill="#8e8e8e" /><circle cx="45.5" cy="142.0" r="5.6" fill="#3a3a3a" /><polygon points="28,53.3 35.5,51.5 34.9,80.6 28.9,80.6" fill="#383838" /><polygon points="30.8,51.5 46.8,59 44,70.3 33.6,60.9" fill="#3a3a3a" /><polygon points="28.9,162.3 44.9,128.5 44.9,162.3" fill="#4c4c4c" /><polygon points="162.3,75.5 215.8,81.1 215.8,91.9 166,83.8" fill="#dcdcdc" /><polygon points="213,82.5 229.9,79.6 243.1,76.8 243.1,109.7 225.2,106.9 222.4,98.4 213,92.8" fill="#a0a0a0" /><polygon points="228,79.6 243.1,75.9 243.1,94.7 233.7,90.9" fill="#cfcfcf" /><polygon points="154.8,66.5 175.4,65.6 175.4,74 156.7,74" fill="#3c3c3c" /><line x1="102.2" y1="7.3" x2="81.9" y2="70.6" stroke="#6e6e6e" stroke-width="4.6" stroke-linecap="round"/><line x1="101.6" y1="7.3" x2="81.3" y2="70.6" stroke="#a8a8a8" stroke-width="1.9319999999999997" stroke-linecap="round"/><line x1="157.6" y1="6.0" x2="134.1" y2="61.8" stroke="#6e6e6e" stroke-width="4.4" stroke-linecap="round"/><line x1="157.0" y1="6.0" x2="133.6" y2="61.8" stroke="#a8a8a8" stroke-width="1.848" stroke-linecap="round"/><line x1="130.7" y1="43.0" x2="105.6" y2="109.7" stroke="#6e6e6e" stroke-width="4.8" stroke-linecap="round"/><line x1="130.2" y1="43.0" x2="105.0" y2="109.7" stroke="#a8a8a8" stroke-width="2.016" stroke-linecap="round"/><line x1="187.6" y1="35.5" x2="158.5" y2="94.7" stroke="#6e6e6e" stroke-width="4.6" stroke-linecap="round"/><line x1="187.1" y1="35.5" x2="158.0" y2="94.7" stroke="#a8a8a8" stroke-width="1.9319999999999997" stroke-linecap="round"/><line x1="170.7" y1="28.0" x2="156.3" y2="60.9" stroke="#6e6e6e" stroke-width="2.4" stroke-linecap="round"/><line x1="170.2" y1="28.0" x2="155.7" y2="60.9" stroke="#a8a8a8" stroke-width="1.008" stroke-linecap="round"/><line x1="93.7" y1="10.5" x2="115.3" y2="53.3" stroke="#8a8a8a" stroke-width="2.2" stroke-linecap="round"/><line x1="93.2" y1="10.5" x2="114.8" y2="53.3" stroke="#e0e0e0" stroke-width="0.924" stroke-linecap="round"/><line x1="46.2" y1="13.9" x2="53.3" y2="31.7" stroke="#8a8a8a" stroke-width="2.6" stroke-linecap="round"/><line x1="45.6" y1="13.9" x2="52.8" y2="31.7" stroke="#dedede" stroke-width="1.092" stroke-linecap="round"/><line x1="30.8" y1="34.6" x2="44.0" y2="69.3" stroke="#8a8a8a" stroke-width="2.2" stroke-linecap="round"/><line x1="30.2" y1="34.6" x2="43.4" y2="69.3" stroke="#dedede" stroke-width="0.924" stroke-linecap="round"/><line x1="36.4" y1="37.4" x2="48.1" y2="71.2" stroke="#8a8a8a" stroke-width="2.2" stroke-linecap="round"/><line x1="35.9" y1="37.4" x2="47.5" y2="71.2" stroke="#dedede" stroke-width="0.924" stroke-linecap="round"/><line x1="79.1" y1="33.1" x2="87.5" y2="50.5" stroke="#8a8a8a" stroke-width="2.4" stroke-linecap="round"/><line x1="78.5" y1="33.1" x2="87.0" y2="50.5" stroke="#dedede" stroke-width="1.008" stroke-linecap="round"/></g></g><rect x="0.5" y="0.5" width="243" height="162" fill="none" stroke="#161616" stroke-width="1.2"/></svg>

<div class="dl" style="left:665.7px;top:82.7px;transform:scaleX(0.9637)">entfernen.</div>
<div class="dh" style="left:652.6px;top:156.7px;transform:scaleX(0.9592)">Rotor</div>
<div class="dl" style="left:652.3px;top:169.7px">–</div>
<div class="dl" style="left:665.7px;top:169.7px;transform:scaleX(0.9562)">Oberes Starterzwischenrad <span class="dg">❸</span> abnehmen.</div>
<div class="dl" style="left:652.3px;top:180.7px">–</div>
<div class="dl" style="left:665.7px;top:180.7px;transform:scaleX(0.9515)">Rotorschraube <span class="dg">❹</span> lösen und mit Scheibe abschrauben.</div>
<div class="dl" style="left:652.3px;top:334.7px">–</div>
<div class="dl" style="left:665.7px;top:334.7px;transform:scaleX(0.9650)">Druckschraube 600.29.009.010 <span class="dg">❺</span> in die Kurbelwelle einschrauben.</div>
<div class="dl" style="left:652.3px;top:357.7px">–</div>
<div class="dl dj" style="left:665.7px;top:357.7px;width:324.30px;transform:scaleX(0.9537)">Rotor mit Abzieher 600.29.009.000 <span class="dg">❻</span> von der Kurbelwelle ziehen,</div>
<div class="dl dj" style="left:665.7px;top:369.7px;width:324.30px;transform:scaleX(0.9537)">Druckschraube wieder entfernen, außerdem kann die Motorblockier-</div>
<div class="dl" style="left:665.7px;top:380.7px;transform:scaleX(0.9379)">schraube herausgeschraubt werden.</div>
<div class="dh" style="left:652.6px;top:512.7px;transform:scaleX(0.9806)">Freilauf</div>
<div class="dl" style="left:652.3px;top:527.7px">–</div>
<div class="dl dj" style="left:665.7px;top:527.7px;width:324.30px;transform:scaleX(0.9537)">Sicherung des Freilaufs <span class="dg">❼</span> entfernen und Freilaufrad <span class="dg">❽</span> von der</div>
<div class="dl" style="left:665.7px;top:538.7px;transform:scaleX(0.9539)">Kurbelwelle abnehmen.</div>
<div class="dl" style="left:652.3px;top:561.7px">–</div>
<div class="dl" style="left:665.7px;top:561.7px;transform:scaleX(0.9537)">Unteres Starterzwischenrad <span class="dg">❾</span> von der Ausgleichswelle abziehen.</div>
<div class="dh" style="left:652.6px;top:692.7px;transform:scaleX(0.9752)">Ausgleichswelle</div>
<div class="dl" style="left:652.3px;top:705.7px">–</div>
<div class="dl dj" style="left:665.7px;top:705.7px;width:324.30px;transform:scaleX(0.9537)">Ausgleichswelle von der Kupplungsseite her mit einem</div>
<div class="dl" style="left:665.7px;top:717.7px;transform:scaleX(0.9604)">Gummihammer vorsichtig ausklopfen.</div>
<div class="abs" style="left:652.5px;top:732px;width:322.5px;height:1px;background:#3a3a3a"></div>
<div style="position:absolute;white-space:nowrap;font-weight:bold;font-size:10.6px;line-height:12px;color:#444;transform-origin:0 0;left:709.8px;top:732.6px">!</div>
<div style="position:absolute;white-space:nowrap;font-weight:bold;font-size:10.6px;line-height:12px;color:#444;transform-origin:0 0;left:773.8px;top:732.6px;transform:scaleX(1.4429)">VORSICHT</div>
<div style="position:absolute;white-space:nowrap;font-weight:bold;font-size:10.6px;line-height:12px;color:#444;transform-origin:0 0;left:914.4px;top:732.6px">!</div>
<div class="abs" style="left:652.5px;top:745.2px;width:322.5px;height:1px;background:#3a3a3a"></div>
<div style="position:absolute;white-space:nowrap;font-size:7px;line-height:12px;color:#444;transform-origin:0 0;left:653.7px;top:749.1px;transform:scaleX(1.0370)"><span style="font-size:9.2px">A</span>UF DIE <span style="font-size:9.2px">S</span>TEUERKETTE ACHTEN, UM ZU VERHINDERN DAß SIE HÄNGENBLEIBT.</div>
<div class="dl dj" style="left:653.6px;top:764.7px;width:336.99px;transform:scaleX(0.9537)"><span style="color:#505050;-webkit-text-stroke:0">HINWEIS:</span> am Rollenlager der Ausgleichswelle (Kupplungsseite) befindet</div>
<div class="dl dj" style="left:653.6px;top:776.7px;width:336.99px;transform:scaleX(0.9537)">sich außen eine Anlaufscheibe, diese sollte vor dem Ausbau der</div>
<div class="dl" style="left:653.6px;top:787.7px;transform:scaleX(0.9572)">Ausgleichswelle entfernt werden.</div>
<div class="dl" style="left:652.3px;top:803.7px">–</div>
<div class="dl" style="left:665.7px;top:803.7px;transform:scaleX(0.9401)">Steuerkette abnehmen und Spannschiene abschrauben.</div>
<div class="dl dj" style="left:653.6px;top:822.7px;width:336.99px;transform:scaleX(0.9537)">HINWEIS: werden Steuerkette und Kettenspannerschiene wieder</div>
<div class="dl dj" style="left:653.6px;top:834.7px;width:336.99px;transform:scaleX(0.9537)">verwendet, so sollte die Laufrichtung und die Zylinderzugehörigkeit</div>
<div class="dl" style="left:653.6px;top:845.7px;transform:scaleX(0.9516)">gekennzeichnet werden.</div></div></div>
<div class="abs" style="left:1145px;top:98px;width:280px;height:34px;background:#484848;border:1px solid #6c6c6c"></div>
<div class="abs" style="left:1160px;top:107.500px;font-size:13.100px;color:#cfcfcf;white-space:nowrap">Suchen 'Seite zuschneiden'</div>
<div class="rpt" style="top:158.8px">PDF-Datei exportieren</div>
<div class="rpt" style="top:203.0px">PDF-Datei erstellen</div>
<div class="rpt" style="top:247.8px">PDF bearbeiten</div>
<div class="rpt" style="top:293.8px">Kommentieren</div>
<div class="rpt" style="top:339.8px">Dateien zusammenführen</div>
<div class="rpt" style="top:385.8px">Seiten organisieren</div>
<div class="rpt" style="top:431.8px">Schwärzen</div>
<div class="rpt" style="top:477.8px">Schützen</div>
<div class="rpt" style="top:523.8px">PDF komprimieren</div>
<div class="rpt" style="top:569.8px">Ausfüllen und unterschreiben</div>
<div class="rpt" style="top:615.8px">Zum Kommentieren senden</div>
<div class="rpt" style="top:661.8px">Mehr Werkzeuge</div>
<svg class="ico" style="left:1403px;top:164px" width="14" height="9" viewBox="0 0 14 9"><path d="M1.500 1.400l5.500 5.400 5.500-5.400" fill="none" stroke="#f0f0f0" stroke-width="1.900"/></svg>
<svg class="ico" style="left:1403px;top:208.2px" width="14" height="9" viewBox="0 0 14 9"><path d="M1.500 1.400l5.500 5.400 5.500-5.400" fill="none" stroke="#f0f0f0" stroke-width="1.900"/></svg>
<svg class="ico" style="left:1154px;top:154px" width="28" height="28" viewBox="0 0 28 28"><path d="M3.900 3.900h9.800l5.400 5.400v7M11.500 21.700H3.900V3.900" fill="none" stroke="#10cfd8" stroke-width="1.900" stroke-linejoin="round"/><g transform="translate(0.6 1.2)"><path d="M9.300 6.300c.2 2.600-1.500 6-4.600 8.400M9.300 6.300c.1 2.300 1.700 4.400 4.400 5.200M6.800 12.300c1.800-.8 4.300-1.200 6.600-.9" fill="none" stroke="#10cfd8" stroke-width="1.1" stroke-linecap="round"/></g><circle cx="18.900" cy="20" r="6.200" fill="#10cfd8"/><path d="M15.300 20h6M19.300 17.400l2.700 2.600-2.700 2.600" fill="none" stroke="#4d4d4d" stroke-width="1.700"/></svg>
<svg class="ico" style="left:1154px;top:198px" width="28" height="28" viewBox="0 0 28 28"><path d="M3.900 3.900h9.800l5.400 5.400v7M11.500 21.700H3.900V3.900" fill="none" stroke="#ff5f7c" stroke-width="1.900" stroke-linejoin="round"/><g transform="translate(0.6 1.2)"><path d="M9.300 6.300c.2 2.600-1.500 6-4.600 8.400M9.300 6.300c.1 2.300 1.700 4.400 4.400 5.200M6.800 12.300c1.800-.8 4.300-1.200 6.600-.9" fill="none" stroke="#ff5f7c" stroke-width="1.1" stroke-linecap="round"/></g><circle cx="18.900" cy="20" r="6.200" fill="#ff5f7c"/><path d="M15.500 20h6.800M18.900 16.600v6.800" fill="none" stroke="#4d4d4d" stroke-width="1.900"/></svg>
<svg class="ico" style="left:1154px;top:243px" width="28" height="28" viewBox="0 0 28 28"><rect x="3.100" y="4.100" width="20" height="7.600" rx="0.800" fill="none" stroke="#ff42c4" stroke-width="1.900"/><rect x="3.100" y="16.200" width="8.800" height="7.600" rx="0.800" fill="none" stroke="#ff42c4" stroke-width="1.900"/><path d="M16 16.600h8M16 20h8M16 23.400h8" stroke="#ff42c4" stroke-width="1.100"/></svg>
<svg class="ico" style="left:1154px;top:290px" width="28" height="28" viewBox="0 0 28 28"><path d="M4 4.200h18.200v13.600H13l-4.600 5v-5H4z" fill="none" stroke="#ffe600" stroke-width="1.900" stroke-linejoin="round"/><path d="M9 18l-.6 5 4.600-5z" fill="#ffe600"/><rect x="7" y="8" width="12.200" height="1.900" fill="#ffe600"/><rect x="7" y="12" width="9.600" height="1.900" fill="#ffe600"/></svg>
<svg class="ico" style="left:1154px;top:334px" width="28" height="28" viewBox="0 0 28 28"><path d="M10.500 15.800v3H2.300V4.300h7.500l3 3v2" fill="none" stroke="#a68bff" stroke-width="1.900" stroke-linejoin="round"/><g transform="translate(1.200 3.200) scale(.78)"><path d="M9.300 6.300c.2 2.600-1.500 6-4.600 8.400M9.300 6.300c.1 2.300 1.700 4.400 4.400 5.200M6.800 12.300c1.800-.8 4.300-1.200 6.600-.9" fill="none" stroke="#a68bff" stroke-width="1.4" stroke-linecap="round"/></g><path d="M13 2.700h8.300l4 4V19H13.600v-6.800H13z" fill="#a68bff"/><path d="M21.600 2.400l4 4h-4z" fill="#4d4d4d" opacity=".0"/><path d="M10.800 12.500h3.600v8.500h3.600l-5.400 6-5.400-6h3.600z" fill="#a68bff" stroke="#4d4d4d" stroke-width=".8"/><path d="M21.300 2.700v4h4" fill="none" stroke="#4d4d4d" stroke-width=".9"/></svg>
<svg class="ico" style="left:1154px;top:382px" width="28" height="28" viewBox="0 0 28 28"><rect x="15.600" y="4.300" width="7.600" height="17.400" rx="0.800" fill="none" stroke="#73f25a" stroke-width="1.900"/><rect x="3.900" y="12.600" width="8.600" height="9.100" fill="none" stroke="#73f25a" stroke-width="1.900" stroke-dasharray="2.100 1.150" stroke-dashoffset="1"/><path d="M3.300 3.300h6.200L3.300 9.900z" fill="#73f25a"/><path d="M5.800 5.800c2.300.2 4.400.9 5.900 2.100" fill="none" stroke="#73f25a" stroke-width="2.200"/></svg>
<svg class="ico" style="left:1154px;top:428px" width="28" height="28" viewBox="0 0 28 28"><g transform="translate(14.300 10.500) rotate(-37)"><path d="M-9.300 -2.750H7a2.750 2.750 0 0 1 0 5.500H-9.300z" fill="none" stroke="#ff42c4" stroke-width="1.900" stroke-linejoin="round"/></g><path d="M1.800 21.800l3.900-4.600 3 4.600z" fill="#ff42c4"/><path d="M11.300 21.800l5.600-5.500H24v5.500z" fill="#ff42c4"/></svg>
<svg class="ico" style="left:1154px;top:474px" width="28" height="28" viewBox="0 0 28 28"><path d="M12.900 3.200c2.600 1.400 5.300 2 7.800 2.200v7.900c0 5.200-3.500 8.700-7.800 10.500C8.600 22 5.100 18.500 5.100 13.300V5.400c2.500-.2 5.200-.8 7.800-2.200z" fill="none" stroke="#a68bff" stroke-width="1.900" stroke-linejoin="round"/></svg>
<svg class="ico" style="left:1154px;top:520px" width="28" height="28" viewBox="0 0 28 28"><path d="M6.600 9V3.900h10.300l3.800 3.800V9M6.600 17.800v3.600h14.100v-3.600" fill="none" stroke="#10cfd8" stroke-width="1.900" stroke-linejoin="round"/><path d="M2.800 9.800l3.800 3.600-3.800 3.600M24.500 9.800l-3.800 3.600 3.800 3.600" fill="none" stroke="#10cfd8" stroke-width="1.800" stroke-linecap="round" stroke-linejoin="round"/><g transform="translate(4.400 2.400)"><path d="M9.300 6.300c.2 2.600-1.500 6-4.600 8.400M9.300 6.300c.1 2.300 1.700 4.400 4.400 5.200M6.800 12.300c1.800-.8 4.300-1.200 6.600-.9" fill="none" stroke="#10cfd8" stroke-width="1.5" stroke-linecap="round"/></g></svg>
<svg class="ico" style="left:1154px;top:565px" width="28" height="28" viewBox="0 0 28 28"><path d="M2.600 23.800l4-7.400L18 4.500c1.800-1.700 5.200 1.500 3.500 3.500L10.300 20.200l.9 3.600z" fill="none" stroke="#cf72fa" stroke-width="1.900" stroke-linejoin="round"/><path d="M11 23.800c1.500-1 3.200-4.700 4.200-4.600 1.200.1-.8 4.400.6 4.500 1.200 0 1.500-3 2.600-3 1 0 .2 3 1.400 3 1.100 0 1.300-1.700 2.300-1.700.9 0 .6 1.700 2.300 1.700" fill="none" stroke="#cf72fa" stroke-width="1.500" stroke-linecap="round"/></svg>
<svg class="ico" style="left:1154px;top:610px" width="28" height="28" viewBox="0 0 28 28"><path d="M11.800 23H3.100V4h9.300l5.400 5.400v4.400" fill="none" stroke="#ffe600" stroke-width="1.900" stroke-linejoin="round"/><path d="M12 4.200v5.600h5.600" fill="none" stroke="#ffe600" stroke-width="1.700"/><path d="M13.500 14.800h9.900c.4 0 .6.300.6.600v7.800c0 .4-.3.600-.6.600h-5.400l-2.800 3v-3h-1.700c-.4 0-.6-.3-.6-.6v-7.800c0-.4.300-.6.600-.6z" fill="#ffe600"/><path d="M15.800 18.100h5.600M15.800 20.600h5.600" stroke="#4d4d4d" stroke-width="1.100"/></svg>
<svg class="ico" style="left:1154px;top:656px" width="28" height="28" viewBox="0 0 28 28"><path d="M4.400 20.300L13.600 11" stroke="#b9b9b9" stroke-width="3.700" stroke-linecap="round"/><circle cx="16.300" cy="8.500" r="5" fill="#b9b9b9"/><path d="M16 9.300l3.300-7.300 5.300 4.800-6.300 4z" fill="#4d4d4d"/><circle cx="4.500" cy="20.300" r=".9" fill="#4d4d4d"/><circle cx="19.100" cy="20.900" r="6.700" fill="#4d4d4d"/><circle cx="19.100" cy="20.900" r="5.800" fill="#b9b9b9"/><path d="M15.900 20.900h6.400M19.100 17.700v6.400" stroke="#4d4d4d" stroke-width="1.700"/></svg>
<div class="abs" style="left:1145px;top:756px;width:280px;height:1px;background:#393939"></div>
<div class="abs" style="left:1130px;width:310px;top:780px;text-align:center;font-size:11.750px;font-weight:bold;line-height:19px;color:#eaeaea;white-space:nowrap">PDFs mit Acrobat Pro DC<br>konvertieren und bearbeiten</div>
<div class="abs" style="left:1130px;width:310px;top:846px;text-align:center;font-size:12px;line-height:19px;color:#4cb8f2;white-space:nowrap">Test starten</div>
</div>
</body>
</html>
